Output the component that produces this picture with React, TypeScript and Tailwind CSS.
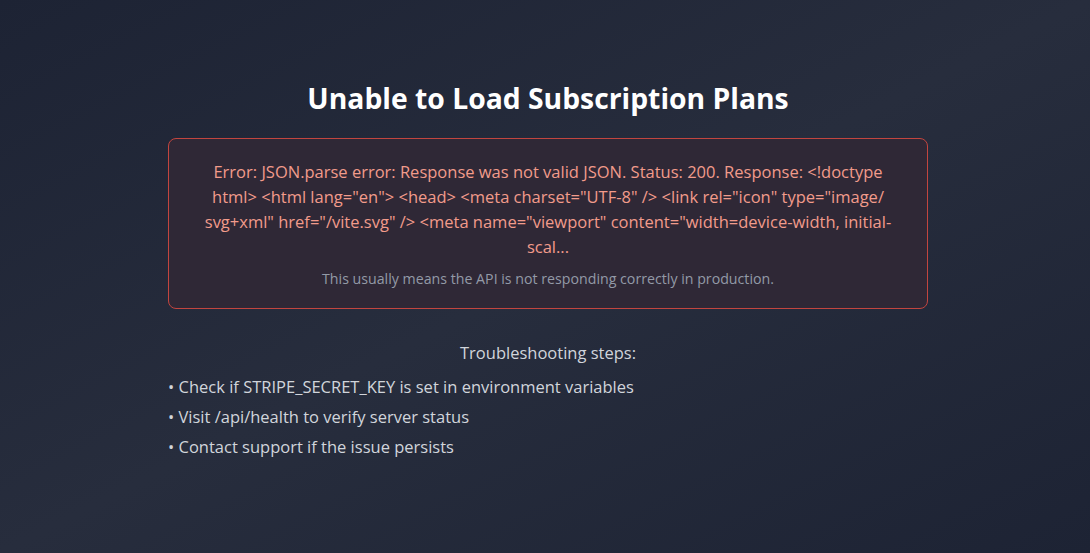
const steps = [
  'Check if STRIPE_SECRET_KEY is set in environment variables',
  'Visit /api/health to verify server status',
  'Contact support if the issue persists',
];

// wrapped the way the reference wraps it
const errorLines = [
  'Error: JSON.parse error: Response was not valid JSON. Status: 200. Response: <!doctype',
  'html> <html lang="en"> <head> <meta charset="UTF-8" /> <link rel="icon" type="image/',
  'svg+xml" href="/vite.svg" /> <meta name="viewport" content="width=device-width, initial-',
  'scal...',
];

export default function App() {
  return (
    <div
      className="min-h-[553px] w-full bg-gradient-to-br from-[#1d2334] via-[#272d3d] to-[#1d2334] pl-[6px] pt-[78px]"
      style={{ fontFamily: '"Open Sans", "Noto Sans", sans-serif' }}
    >
      <div className="mx-auto w-[760px]">
        <h1 className="mb-5 text-center text-[28.3px] font-bold leading-[40px] text-white">
          Unable to Load Subscription Plans
        </h1>

        <div className="rounded-lg border border-[#c2453f] bg-[#2f2836] px-4 pb-[19px] pt-[20px] text-center">
          <p className="text-[16.5px] leading-[25px] text-[#f29b8b]">
            {errorLines.map((line) => (
              <span key={line} className="block whitespace-nowrap">
                {line}
              </span>
            ))}
          </p>
          <p className="mt-[10px] text-[14.2px] leading-[20px] text-[#939aa7]">
            This usually means the API is not responding correctly in production.
          </p>
        </div>

        <div className="mt-[32px] text-[16.5px] text-[#d1d5db]">
          <p className="text-center leading-[24px]">Troubleshooting steps:</p>
          <ul className="mt-[10px] flex flex-col gap-[6px]">
            {steps.map((step) => (
              <li key={step} className="leading-[24px]">
                • {step}
              </li>
            ))}
          </ul>
        </div>
      </div>
    </div>
  );
}
